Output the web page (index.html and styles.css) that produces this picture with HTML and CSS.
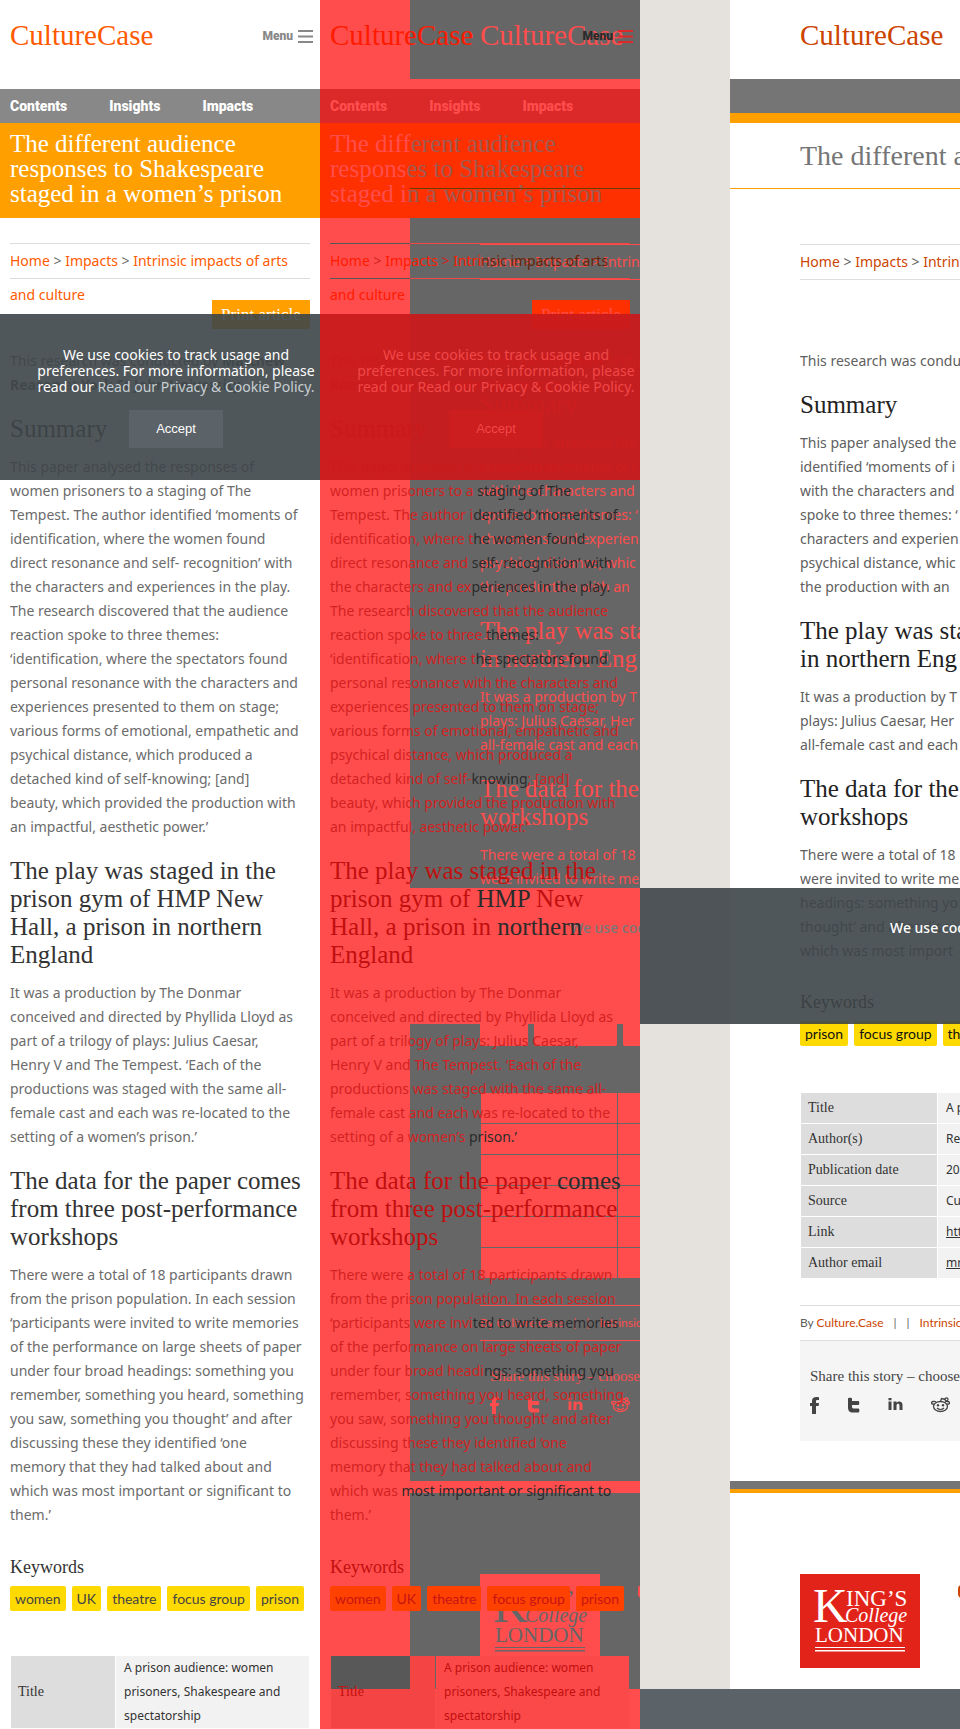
FILE: index.html
```html
<!DOCTYPE html>
<html lang="en">
<head>
<meta charset="utf-8">
<title>CultureCase – page comparison</title>
<link rel="stylesheet" href="styles.css">
</head>
<body>
<main class="compare">
  <section class="panel">
    <div class="page mobile">
      <header class="top"><a class="brand" href="#">CultureCase</a><button class="menu" type="button"><span class="same">Menu</span><svg width="15" height="13" viewBox="0 0 15 13" aria-hidden="true"><path d="M0 1h15M0 6.500h15M0 12h15" stroke="currentColor" stroke-width="2"/></svg></button></header>
      <nav class="nav"><a href="#">Contents</a><a href="#">Insights</a><a href="#">Impacts</a></nav>
      <h1 class="title">The diff<span class="same">erent audience</span><br>respons<span class="same">es to Shakespeare</span><br>staged i<span class="same">n a women’s prison</span></h1>
      <div class="content">
        <div class="crumbs"><a href="#">Home</a> &gt; <a href="#">Impacts</a> &gt; <a href="#">Intri<span class="same">nsic impacts of arts</span><br>and culture</a></div>
        <button class="print" type="button">Print article</button>
        <p>This research was conducted by <b>Matthew<br>Reason</b> at <b>York St John University</b></p>
        <h2>Summary</h2>
        <p>This paper analysed the responses of<br>women prisoners to a <span class="same">staging of The</span><br>Tempest. The author i<span class="same">dentified ‘moments of</span><br>identification, where t<span class="same">he women found</span><br>direct resonance and <span class="same">self- recognition’ with</span><br>the characters and ex<span class="same">periences in the play.</span><br>The research discovered that the audience<br>reaction spoke to three <span class="same">themes:</span><br>‘identification, where t<span class="same">he spectators found</span><br>personal resonance with the characters and<br>experiences presented to them on stage;<br>various forms of emotional, empathetic and<br>psychical distance, which produced a<br>detached kind of self-<span class="same">knowing</span>; [and]<br>beauty, which provided the production with<br>an impactful, aesthetic power.’</p>
        <h2>The play was staged in the<br>prison gym of <span class="same">HMP</span> New<br>Hall, a prison in <span class="same">northern</span><br>England</h2>
        <p>It was a production by The Donmar<br>conceived and directed by Phyllida Lloyd as<br>part of a trilogy of plays: Julius Caesar,<br>Henry V and The Tempest. ‘Each of the<br>productions was staged with the same all-<br>female cast and each was re-located to the<br>setting of a women’s <span class="same">prison.’</span></p>
        <h2>The data for the paper <span class="same">comes</span><br>from three post-performance<br>workshops</h2>
        <p>There were a total of 18 participants drawn<br>from the prison population. In each session<br>‘participants were invi<span class="same">ted to write memories</span><br>of the performance on large sheets of paper<br>under four broad headi<span class="same">ngs: something you</span><br>remember, something you heard, something<br>you saw, something you thought’ and after<br>discussing these they identified ‘one<br>memory that they had talked about and<br>which was <span class="same">most important or significant to</span><br>them.’</p>
        <h3>Keywords</h3>
        <div class="tags"><a href="#">women</a><a href="#">UK</a><a href="#">theatre</a><a href="#">focus group</a><a href="#">prison</a></div>
        <table class="facts"><tr><th scope="row">Title</th><td>A prison audience: women<br>prisoners, Shakespeare and<br>spectatorship</td></tr></table>
      </div>
      <aside class="cookie"><div>We use cookies to track usage and<br>preferences. For more information, please<br>read our <a href="#">Read our Privacy &amp; Cookie Policy.</a></div><button type="button">Accept</button></aside>
    </div>
  </section>

  <section class="panel overlay" aria-label="Overlay"></section>

  <section class="panel">
    <div class="page desktop">
      <div class="sheet">
        <header class="top"><a class="brand" href="#">CultureCase</a></header>
        <div class="band"></div>
        <h1 class="title">The different a</h1>
        <div class="content">
          <div class="crumbs"><a href="#">Home</a> &gt; <a href="#">Impacts</a> &gt; <a href="#">Intrin</a></div>
          <p class="lead">This research was condu</p>
          <h2>Summary</h2>
          <p>This paper analysed the<br>identified ‘moments of i<br>with the characters and<br>spoke to three themes: ‘<br>characters and experien<br>psychical distance, whic<br>the production with an</p>
          <h2>The play was sta<br>in northern Eng</h2>
          <p>It was a production by T<br>plays: Julius Caesar, Her<br>all-female cast and each</p>
          <h2>The data for the<br>workshops</h2>
          <p>There were a total of 18<br>were invited to write me<br>headings: something yo<br>thought’ and after discu<br>which was most import</p>
          <h3>Keywords</h3>
          <div class="tags"><a href="#">prison</a><a href="#">focus group</a><a href="#">the</a></div>
          <table class="facts">
            <tr><th scope="row">Title</th><td>A p</td></tr>
            <tr><th scope="row">Author(s)</th><td>Rea</td></tr>
            <tr><th scope="row">Publication date</th><td>20</td></tr>
            <tr><th scope="row">Source</th><td>Cu</td></tr>
            <tr><th scope="row">Link</th><td><a href="#">htt</a></td></tr>
            <tr><th scope="row">Author email</th><td><a href="#">mr</a></td></tr>
          </table>
          <div class="meta"><span>By <a href="#">Culture.Case</a></span><span>|</span><span>|</span><a href="#">Intrinsic</a></div>
          <div class="share">
            <div>Share this story – choose</div>
            <div class="icons">
              <a href="#" aria-label="Facebook"><svg width="9" height="17" viewBox="0 0 9 17"><path d="M2 17V9H0V6h2V4c0-3 2-4.500 7-3.800V3C6.500 2.800 6 3 6 4.500V6h3L8.600 9H6v8z"/></svg></a>
              <a href="#" aria-label="Twitter"><svg width="13" height="17" viewBox="0 0 13 17"><path d="M1 1.500C1 .5 5 .5 5 1.500V4h6.500c1 0 1 4 0 4H5v1.500c0 1.500.5 2 2 2h4.500c1.200 0 1.200 4 0 4H6c-3.500 0-5-2-5-5z"/></svg></a>
              <a href="#" aria-label="LinkedIn"><svg width="15" height="17" viewBox="0 0 15 17"><path d="M.5 4.500h3V13h-3zM.5 1h3v2.300h-3zM5.500 4.500h3v1.200C10.500 3.500 14.500 4 14.500 7.800V13h-3V8.500c0-2.500-3-2.300-3 0V13h-3z"/></svg></a>
              <a href="#" aria-label="Reddit"><svg width="19" height="17" viewBox="0 0 19 17"><g fill="none" stroke="currentColor" stroke-width="1.300"><ellipse cx="9.500" cy="9.500" rx="7" ry="5"/><path d="M9.500 4.500l1-3 4 1M6 11c2 1.800 5 1.800 7 0M3 7C-.5 7.500 0 5 2 4.500s3 .5 3 .5M16 7c3.500.5 3-2 1-2.500s-3 .5-3 .5"/><circle cx="15.500" cy="2.300" r="1.500"/></g><circle cx="7" cy="8.300" r="1.200"/><circle cx="12" cy="8.300" r="1.200"/></svg></a>
            </div>
          </div>
        </div>
        <div class="rule"></div>
        <footer class="foot">
          <svg class="kcl" width="120" height="94" viewBox="0 0 120 94" role="img" aria-label="King's College London">
            <rect width="120" height="94"/>
            <g class="ink"><text x="13" y="48" font-size="48">K</text><text x="46" y="32" font-size="23">ING’S</text><text x="45" y="48" font-size="20" font-style="italic">College</text><text x="15" y="68" font-size="21">LONDON</text><path d="M15 73h90v1H15zM15 76h90v1.500H15z"/></g>
          </svg>
          <div class="legal"><i></i></div>
        </footer>
      </div>
      <div class="bar"></div>
      <aside class="cookie">We use coo</aside>
    </div>
  </section>
</main>
<script src="script.js"></script>
</body>
</html>
```

FILE: script.js
```js
// The middle panel stacks copies of both pages, tinted by the stylesheet.
var overlay = document.querySelector('.overlay');
overlay.appendChild(document.querySelector('.desktop').cloneNode(true));
overlay.appendChild(document.querySelector('.mobile').cloneNode(true));
```

FILE: styles.css
```css
* { box-sizing: border-box; }
body {
  margin: 0;
  font: 14px/24px "Noto Sans", sans-serif;
}
.compare {
  display: grid;
  grid-template-columns: repeat(3, minmax(0, 1fr));
  overflow: hidden;
}
.panel { display: grid; overflow: hidden; }
.page {
  --bg: #fff; --text: #6b6b6b; --head: #333; --link: #ff5a00; --brand: #ff5a00;
  --line: #ddd; --tag: #ffda00; --tagtext: #444; --th: #ddd; --td: #f2f2f2; --cell: #333;
  --cookie: rgba(61, 69, 72, 0.9);
  position: relative;
  grid-area: 1 / 1;
  overflow: hidden;
  white-space: nowrap;
  background: var(--bg);
  color: var(--text);
}
a { color: var(--link); text-decoration: none; }
button { border: 0; padding: 0; font: inherit; color: inherit; background: none; }
p { margin: 0; }
h1, h2, h3, th, .brand, .print, .share { font-family: "Liberation Serif", serif; font-weight: 400; }
h1, h2, h3 { margin: 0; }
h2 { margin: 18px 0 12px; font-size: 25px; line-height: 28px; color: var(--head); }
h3 { margin: 28px 0 7px; font-size: 18px; line-height: 24px; color: var(--head); }
.brand { font-size: 29px; line-height: 36px; color: var(--brand); }
.top { display: flex; justify-content: space-between; align-items: flex-start; padding: 17px 7px 0 10px; height: 89px; }
.menu { display: flex; align-items: center; gap: 5px; margin-top: 7px; color: #888; font: 900 12px/24px Roboto, sans-serif; }
.nav { display: flex; gap: 42px; padding-left: 10px; background: #888; font: 900 14px/34px Roboto, sans-serif; }
.nav a { color: #fff; }
.title { position: relative; padding: 8px 10px 12px; font-size: 25px; line-height: 25px; background: #ff9f00; color: #fff; }
.content { padding: 25px 10px 0; }
.mobile .content { margin-bottom: -4px; }
.crumbs { height: 36px; border: solid var(--line); border-width: 1px 0; line-height: 34px; }
.print { display: block; width: 98px; margin: 21px 0 20px auto; font-size: 17px; line-height: 29px; background: #ff9f00; color: #fff; }
.tags { display: flex; gap: 6px; font: 14px/25px Lato, sans-serif; }
.tags a { padding: 0 5px; border-radius: 2px; background: var(--tag); color: var(--tagtext); }
.facts { width: 100%; margin-top: 44px; border-spacing: 1px; font-size: 12px; color: var(--cell); }
.facts th { position: relative; width: 104px; padding: 0 7px; text-align: left; font-size: 14px; background: var(--th); }
.facts td { padding: 0 8px; background: var(--td); }
.cookie { position: absolute; top: 314px; left: 0; right: 0; padding: 33px 0 32px 32px; background: var(--cookie); color: #fff; text-align: center; line-height: 16px; }
.cookie a { color: #c8d0d4; }
.cookie button { width: 94px; margin-top: 15px; font: 13px/38px "Liberation Sans", sans-serif; background: #5b6268; }

.desktop { --bg: #e5e1dd; --sheet: #fff; --text: #606060; --head: #222; --link: #cc4400; --brand: #cc4400; --tagtext: #111; --shade: #757575; --gold: #ff9f00; --box: #f5f5f5; --ink: #fff; --logo: #e2231a; --bar: #5b6268; --icon: #444; }
.desktop .sheet { margin-left: 28.125%; background: var(--sheet); }
.desktop .top { height: 79px; padding-left: 70px; }
.desktop .band { height: 44px; background: var(--shade); border-bottom: 10px solid var(--gold); }
.desktop .title { padding: 16px 0 16px 70px; font-size: 28px; line-height: 33px; background: none; color: #757575; border-bottom: 1px solid var(--gold); }
.desktop .content { padding: 55px 0 0 70px; }
.desktop .lead { margin-top: 69px; }
.desktop h3 { margin-top: 27px; }
.desktop .facts { width: max-content; margin-top: 46px; }
.desktop .facts th { width: auto; min-width: 136px; line-height: 30px; }
.desktop .facts td { line-height: 30px; }
.desktop .facts a { color: inherit; text-decoration: underline; }
.meta { display: flex; gap: 10px; height: 36px; margin-top: 26px; border: solid var(--line); border-width: 1px 0; font: 12px/34px Lato, sans-serif; }
.share { height: 100px; padding: 23px 10px 0; background: var(--box); color: var(--icon); font-size: 15px; line-height: 24px; }
.icons { display: flex; gap: 28px; margin-top: 9px; }
.icons a { color: var(--icon); }
.icons svg { display: block; fill: currentColor; }
.rule { height: 12px; margin-top: 40px; background: var(--shade); border-bottom: 4px solid var(--gold); }
.foot { display: flex; gap: 38px; height: 196px; padding: 81px 0 0 70px; }
.kcl { flex: none; fill: var(--logo); font-family: "Liberation Serif", serif; }
.ink { fill: var(--ink); }
.legal i { display: block; width: 12px; height: 13px; margin-top: 11px; border-radius: 4px; background: var(--brand); }
.bar { position: relative; height: 40px; background: var(--bar); }
.desktop .cookie { top: 888px; height: 136px; padding: 32px 0 0 250px; text-align: left; font-weight: 500; }

.overlay .desktop { --bg: #ff4d4d; --sheet: #666; --text: #ff4d4d; --head: #ff4d4d; --link: #ff4d4d; --brand: #ff4d4d; --line: #ff4d4d; --tag: #ff4d4d; --tagtext: #ff4d4d; --th: #ff4d4d; --td: #ff4d4d; --cell: #ff4d4d; --shade: #ff4d4d; --gold: #ff4d4d; --box: #666; --ink: #666; --logo: #ff4d4d; --bar: #ff4d4d; --icon: #ff4d4d; --cookie: #ff4d4d; }
.overlay .desktop .cookie { color: #777; }
.overlay .mobile { --bg: transparent; --text: #d42222; --head: #c20f0f; --link: #ff1b00; --brand: #ff1b00; --tag: #ff4100; --tagtext: #c71414; --th: #f44444; --td: #fb4949; --cell: #c20f0f; --cookie: rgba(201, 26, 28, 0.95); }
.overlay .mobile .same { color: #2b2b2b; }
.overlay .mobile .menu { color: #db2929; }
.overlay .mobile .nav { background: #db2929; }
.overlay .mobile .nav a { color: #ff4d4d; }
.overlay .mobile .title { background: #ff3000; color: #ff4d4d; }
.overlay .mobile .title .same { color: #a05a52; }
.overlay .mobile .title::after { content: ""; position: absolute; top: 65px; left: 28.125%; right: 0; height: 1px; background: #664000; }
.overlay .mobile .crumbs { border-image: linear-gradient(to right, #585858 80px, #f54646 80px) 1; }
.overlay .mobile .crumbs .same { color: #662407; }
.overlay .mobile .print { background: #ff3000; color: #ff4d4d; }
.overlay .mobile .cookie, .overlay .mobile .cookie a { color: #f04848; }
.overlay .mobile .cookie button { background: #cc1d1f; }
.overlay .mobile th::before { content: ""; position: absolute; z-index: -1; top: 0; left: 0; width: 79px; height: 33px; background: #585858; }
.overlay .mobile th { z-index: 0; }
```
